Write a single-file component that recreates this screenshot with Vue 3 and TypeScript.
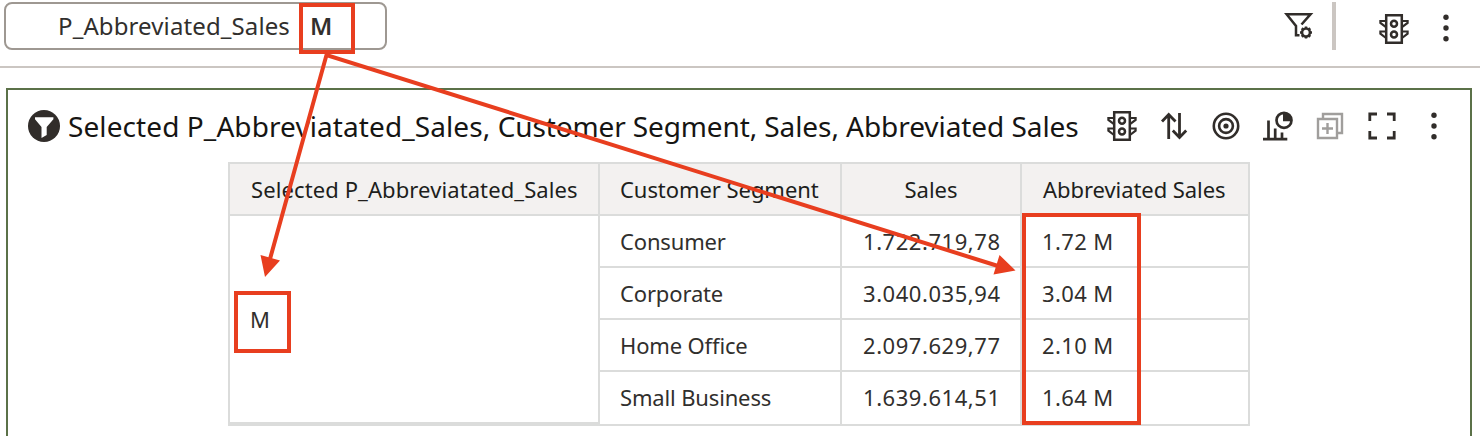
<script setup lang="ts">
interface Row {
  segment: string
  sales: string
  short: string
}

const rows: Row[] = [
  { segment: 'Consumer', sales: '1.722.719,78', short: '1.72 M' },
  { segment: 'Corporate', sales: '3.040.035,94', short: '3.04 M' },
  { segment: 'Home Office', sales: '2.097.629,77', short: '2.10 M' },
  { segment: 'Small Business', sales: '1.639.614,51', short: '1.64 M' },
]
const teeth = [0, 45, 90, 135, 180, 225, 270, 315]
</script>

<template>
  <div class="page">
    <svg class="defs" width="0" height="0">
      <symbol id="traffic" viewBox="0 0 30 30">
        <g fill="none" stroke="#312d2a" stroke-width="2.5">
          <path d="M7.2 1.3H22.8V28.7H7.2Z" />
          <circle cx="15" cy="9.8" r="3" />
          <circle cx="15" cy="20.4" r="3" />
          <path stroke-width="2.2" d="M7 7H1.4V9L7 13.2M7 17.5H1.4V19.7L7 24M23 7H28.6V9L23 13.2M23 17.5H28.6V19.7L23 24" />
        </g>
      </symbol>
      <symbol id="dots" viewBox="0 0 6 28">
        <g fill="#312d2a">
          <circle cx="3" cy="3.3" r="2.7" /><circle cx="3" cy="14" r="2.7" /><circle cx="3" cy="24.7" r="2.7" />
        </g>
      </symbol>
    </svg>

    <header class="bar">
      <div class="chip">
        <span class="name">P_Abbreviated_Sales</span>
        <b class="val">M</b>
      </div>
      <div class="bar-tools">
        <svg class="filter" width="30" height="28" viewBox="0 0 30 28">
          <g fill="none" stroke="#312d2a" stroke-width="2.5">
            <path d="M17.5 12.5L26.6 2.2H2.6L12 14V23.300H15.500" />
            <circle cx="22" cy="20.5" r="3.9" />
            <path v-for="t in teeth" :key="t" d="M22 16.5V14.5" :transform="`rotate(${t} 22 20.5)`" />
          </g>
        </svg>
        <i class="divider"></i>
        <svg class="t1" width="30" height="30"><use href="#traffic" /></svg>
        <svg class="d1" width="6" height="28"><use href="#dots" /></svg>
      </div>
    </header>

    <main class="panel">
      <div class="head">
        <svg class="badge" width="32" height="32" viewBox="0 0 32 32">
          <circle cx="16" cy="16" r="16" fill="#312d2a" />
          <path d="M7 7.2H25.4V9.3L18.7 17V25L13.5 28V17L7 9.3Z" fill="#fff" />
        </svg>
        <h1><span class="w1">Selected P_Abbreviatated_Sales, </span><span class="w2">Customer Segment, </span><span class="w3">Sales, Abbreviated Sales</span></h1>
        <div class="tools">
          <svg class="light" width="30" height="30"><use href="#traffic" /></svg>
          <svg width="28" height="28" viewBox="0 0 28 28" fill="none" stroke="#312d2a" stroke-width="2.8">
            <path d="M8.7 27V2.5M2 9.5L8.7 2.5L15.5 9.5M19.5 1V25.5M12.8 18.5L19.5 25.5L26.2 18.5" />
          </svg>
          <svg width="28" height="28" viewBox="0 0 28 28" fill="none" stroke="#312d2a" stroke-width="2.6">
            <circle cx="14" cy="14" r="12.2" /><circle cx="14" cy="14" r="6.9" /><circle cx="14" cy="14" r="2.6" fill="#312d2a" stroke="none" />
          </svg>
          <svg class="chart" width="30" height="30" viewBox="0 0 30 30" fill="none" stroke="#312d2a" stroke-width="2.7">
            <path d="M0 28.2H24.3M5.5 28V9.5M12.2 28V17.5M19 28V21.5" />
            <circle cx="21" cy="9.3" r="7.5" /><path d="M20 1.5A8.2 8.2 0 0 1 28.8 10.3H20Z" fill="#312d2a" stroke="none" />
          </svg>
          <svg width="28" height="28" viewBox="0 0 28 28" fill="none" stroke="#a09e9c" stroke-width="2.4">
            <path d="M7 6V2H26V21H22M2 7H21V26H2ZM11.5 11V22M6 16.5H17" />
          </svg>
          <svg width="28" height="28" viewBox="0 0 28 28" fill="none" stroke="#312d2a" stroke-width="2.8">
            <path d="M1.8 9V2H9M19 2H26.2V9M26.2 19V26H19M9 26H1.8V19" />
          </svg>
          <svg class="d2" width="6" height="28"><use href="#dots" /></svg>
        </div>
      </div>

      <div class="table">
        <div class="cell th c1"><span>Selected P_Abbreviatated_Sales</span></div>
        <div class="cell th c2"><span>Customer Segment</span></div>
        <div class="cell th c3"><span>Sales</span></div>
        <div class="cell th c4"><span>Abbreviated Sales</span></div>
        <div class="cell merged"><span>M</span></div>
        <template v-for="r in rows" :key="r.segment">
          <div class="cell seg"><span>{{ r.segment }}</span></div>
          <div class="cell num"><span>{{ r.sales }}</span></div>
          <div class="cell short"><span>{{ r.short }}</span></div>
        </template>
      </div>
    </main>

    <svg class="notes" width="1480" height="436" viewBox="0 0 1480 436">
      <g fill="none" stroke="#e83e1f" stroke-width="4">
        <path d="M301 5H353V52H301ZM236 293H289V351H236ZM1024 215H1139V423H1024Z" />
        <path d="M270 259L326.5 55L998 266" />
      </g>
      <path d="M260.5 255L280 260.5L265 277ZM999.5 255L1015.5 270.5L993.5 274.5Z" fill="#e83e1f" />
    </svg>
  </div>
</template>

<style scoped>
.page {
  position: relative;
  width: 1480px;
  height: 436px;
  overflow: hidden;
  background: #fff;
  color: #312f2d;
  font-family: 'Noto Sans', sans-serif;
}
.page *, .page { box-sizing: border-box; }
.defs { position: absolute; }
svg { display: block; flex: none; }
.bar {
  height: 68px;
  border-bottom: 2px solid #cbc6c2;
  display: flex;
  justify-content: space-between;
  padding: 2px 31px 0 4px;
}
.chip {
  width: 383px;
  height: 48px;
  border: 2px solid #9e9892;
  border-radius: 8px;
  padding-left: 52px;
  display: flex;
  line-height: 44px;
  font-size: 24px;
  white-space: nowrap;
}
.name { width: 252px; letter-spacing: 0.11px; }
.val { font-weight: 600; }
.bar-tools { display: flex; }
.filter { margin: 10px 18px 0 0; }
.divider { width: 4px; height: 48px; background: #cbc6c2; margin-right: 43px; }
.t1 { margin: 12px 34px 0 0; }
.d1 { margin-top: 12px; }
.panel {
  margin: 20px 8px 0 6px;
  height: 360px;
  border: 2px solid #5b7148;
}
.head { height: 72px; display: flex; justify-content: space-between; padding: 20px 33px 0 20px; }
h1 {
  margin: -2px auto 0 8px;
  font-size: 28px;
  line-height: 36px;
  font-weight: 400;
  color: #161513;
  white-space: nowrap;
}
.w1 { letter-spacing: 0.09px; }
.w2 { letter-spacing: -0.13px; }
.w3 { letter-spacing: -0.06px; }
.tools { display: flex; align-items: center; height: 32px; gap: 24px; }
.light { margin: 0 -1px; }
.chart { margin: 0 -1px; }
.d2 { margin-left: 11px; }
.table {
  width: 1022px;
  margin-left: 220px;
  border: 2px solid #dbdcdb;
  display: grid;
  grid-template-columns: 370px 242px 180px 226px;
  grid-template-rows: repeat(5, 52px);
  font-size: 22px;
}
.cell {
  border-right: 2px solid #dbdcdb;
  border-bottom: 2px solid #dbdcdb;
  padding: 0 20px;
  line-height: 51px;
  white-space: nowrap;
}
.th { background: #f3f1f0; color: #201e1c; }
.c1 { padding-left: 21px; letter-spacing: 0.1px; }
.c2 { letter-spacing: -0.06px; }
.c4, .short { border-right: 0; }
.c4 { padding-left: 21px; letter-spacing: -0.06px; }
.c3 { text-align: center; }
.seg { letter-spacing: -0.15px; }
.num { padding: 0; text-align: left; text-indent: 21px; letter-spacing: 0.55px; }
.short { letter-spacing: 0.4px; }
.merged { grid-row: 2 / 6; grid-column: 1; line-height: 206px; }
.cell:nth-last-child(-n + 3) { border-bottom: 0; }
.notes { position: absolute; left: 0; top: 0; }
</style>
